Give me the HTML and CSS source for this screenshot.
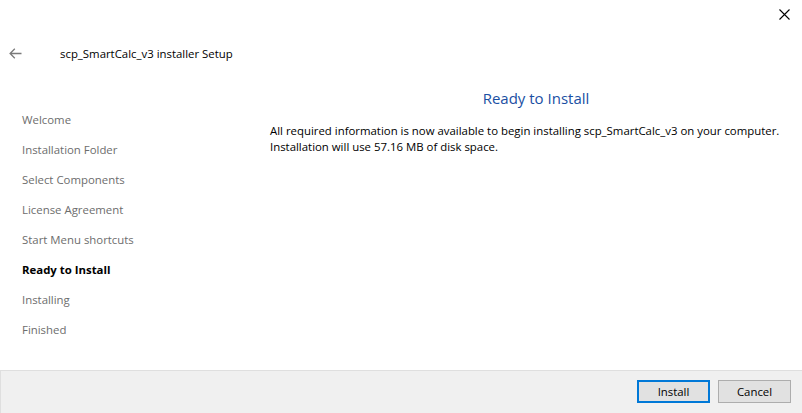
FILE: index.html
```html
<!DOCTYPE html>
<html>
<head>
<meta charset="utf-8">
<link rel="stylesheet" href="styles.css">
</head>
<body>
<div class="window">
  <div class="titlebar">
    <button class="close" aria-label="Close">
      <svg width="11" height="11" viewBox="0 0 11 11"><path d="M0.5 0.5 L10.5 10.5 M10.5 0.5 L0.5 10.5" stroke="#000" stroke-width="1.1" fill="none"/></svg>
    </button>
  </div>
  <div class="header">
    <span class="back">
      <svg width="13" height="11" viewBox="0 0 13 11"><path d="M12.5 5.5 H1.2 M5.8 0.8 L1.1 5.5 L5.8 10.2" stroke="#7a7a7a" stroke-width="1.3" fill="none"/></svg>
    </span>
    <span class="title">scp_SmartCalc_v3 installer Setup</span>
  </div>
  <div class="main">
    <nav class="steps">
      <div class="step">Welcome</div>
      <div class="step">Installation Folder</div>
      <div class="step">Select Components</div>
      <div class="step">License Agreement</div>
      <div class="step">Start Menu shortcuts</div>
      <div class="step current">Ready to Install</div>
      <div class="step">Installing</div>
      <div class="step">Finished</div>
    </nav>
    <section class="content">
      <h1 class="heading">Ready to Install</h1>
      <p class="text">All required information is now available to begin installing scp_SmartCalc_v3 on your computer.<br>Installation will use 57.16 MB of disk space.</p>
    </section>
  </div>
  <div class="footer">
    <button class="btn default">Install</button>
    <button class="btn">Cancel</button>
  </div>
</div>
</body>
</html>
```
FILE: styles.css
```css
* { box-sizing: border-box; }
html, body { margin: 0; padding: 0; background: #fff; }
body {
  font-family: "Open Sans", "Noto Sans", sans-serif;
  font-size: 11.4px;
  color: #000;
}
.window {
  width: 802px;
  height: 413px;
  display: flex;
  flex-direction: column;
  overflow: hidden;
}
.titlebar {
  height: 30px;
  display: flex;
  justify-content: flex-end;
  align-items: flex-start;
}
.close {
  border: 0;
  background: transparent;
  padding: 0;
  margin: 9px 12px 0 0;
  width: 11px;
  height: 11px;
  display: flex;
}
.header {
  height: 50px;
  display: flex;
  align-items: center;
  padding-left: 9px;
  padding-bottom: 4px;
}
.back { display: flex; width: 51px; }
.title { font-size: 11.4px; color: #000; }
.main {
  flex: 1;
  display: flex;
}
.steps {
  width: 270px;
  flex-shrink: 0;
  padding-top: 25px;
  padding-left: 22px;
}
.step {
  height: 30px;
  line-height: 30px;
  color: #6d6d6d;
  white-space: nowrap;
}
.step.current { color: #000; font-weight: bold; }
.content {
  flex: 1;
  padding-top: 8px;
  padding-right: 0;
}
.heading {
  margin: 0 0 15px 0;
  font-size: 15px;
  font-weight: normal;
  line-height: 20px;
  color: #1a4fa3;
  text-align: center;
}
.text {
  margin: 0;
  line-height: 16px;
  white-space: nowrap;
}
.footer {
  height: 43px;
  background: #f0f0f0;
  border-top: 1px solid #dfdfdf;
  border-left: 1px solid #dfdfdf;
  display: flex;
  justify-content: flex-end;
  align-items: flex-start;
  gap: 8px;
  padding: 9px 11px 0 0;
}
.btn {
  width: 73px;
  height: 23px;
  font-family: inherit;
  font-size: 11.4px;
  background: #e1e1e1;
  border: 1px solid #adadad;
  color: #000;
  padding: 0;
}
.btn.default {
  border: 2px solid #0078d7;
}
```
